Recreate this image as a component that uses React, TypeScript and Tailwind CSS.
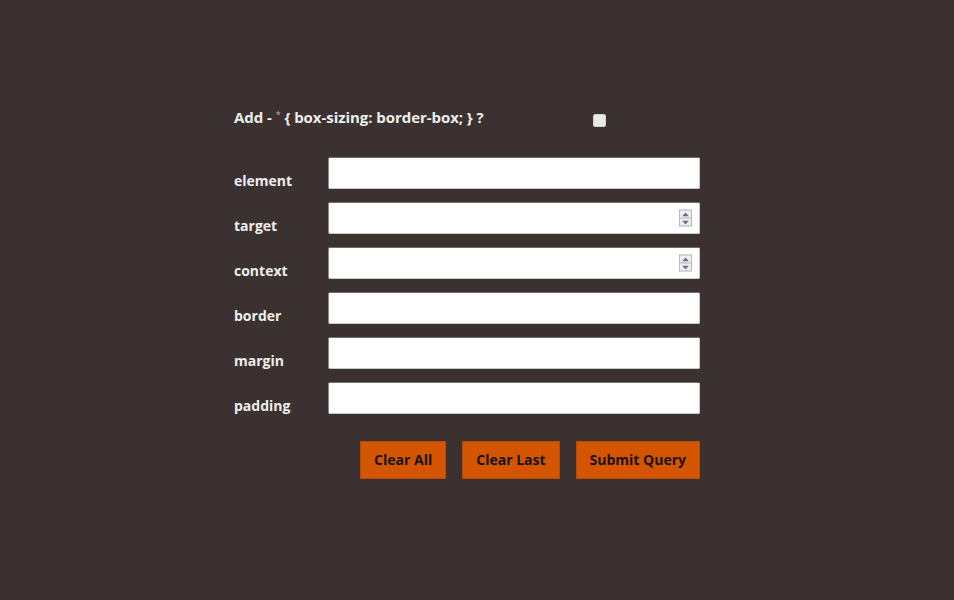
import React from "react";

const fields = [
  { name: "element", spin: false },
  { name: "target", spin: true },
  { name: "context", spin: true },
  { name: "border", spin: false },
  { name: "margin", spin: false },
  { name: "padding", spin: false },
];

const Spinner = () => (
  <div className="absolute right-[7px] top-1/2 -translate-y-1/2 flex flex-col w-[13px] h-[17px] border border-[#b8b8c0] bg-[#eceef2]">
    <div className="flex-1 flex items-center justify-center border-b border-[#b8b8c0]">
      <svg width="7" height="4" viewBox="0 0 7 4">
        <path d="M0 4 L3.5 0 L7 4 Z" fill="#6a6f80" />
      </svg>
    </div>
    <div className="flex-1 flex items-center justify-center">
      <svg width="7" height="4" viewBox="0 0 7 4">
        <path d="M0 0 L3.5 4 L7 0 Z" fill="#6a6f80" />
      </svg>
    </div>
  </div>
);

export default function App() {
  return (
    <div
      className="min-h-[600px] w-full bg-[#3a3130] pt-[106px] pl-[234px]"
      style={{ fontFamily: '"Open Sans", "Noto Sans", sans-serif' }}
    >
      <div className="w-[466px]">
        <div className="flex items-center h-[22px]">
          <span className="text-[15px] font-bold text-[#eeeeee] tracking-[-0.05px]">
            Add - <sup className="text-[9px] text-[#bbbbbb] font-normal">*</sup>{" "}
            {"{ box-sizing: border-box; } ?"}
          </span>
          <span className="ml-auto mr-[94px] mt-[6px] w-[13px] h-[13px] bg-[#e8e8e8] border border-[#cfcfcf] rounded-[2px]" />
        </div>

        <div className="mt-[29px] flex flex-col gap-[13px]">
          {fields.map((f) => (
            <div key={f.name} className="flex items-start h-[32px]">
              <label className="w-[94px] pt-[14px] leading-5 text-[14px] font-bold text-[#eeeeee]">
                {f.name}
              </label>
              <div className="relative w-[372px] h-[32px] bg-white rounded-[2px] border border-[#c9c9c9] border-t-[#6e6e6e] border-l-[#8a8a8a]">
                {f.spin && <Spinner />}
              </div>
            </div>
          ))}
        </div>

        <div className="mt-[27px] flex justify-end gap-[16px]">
          {["Clear All", "Clear Last", "Submit Query"].map((b) => (
            <button
              key={b}
              className="h-[38px] px-[13px] pb-[2px] bg-[#d45500] text-[14px] font-bold text-[#1a1210] border border-[#b84a05]"
            >
              {b}
            </button>
          ))}
        </div>
      </div>
    </div>
  );
}
